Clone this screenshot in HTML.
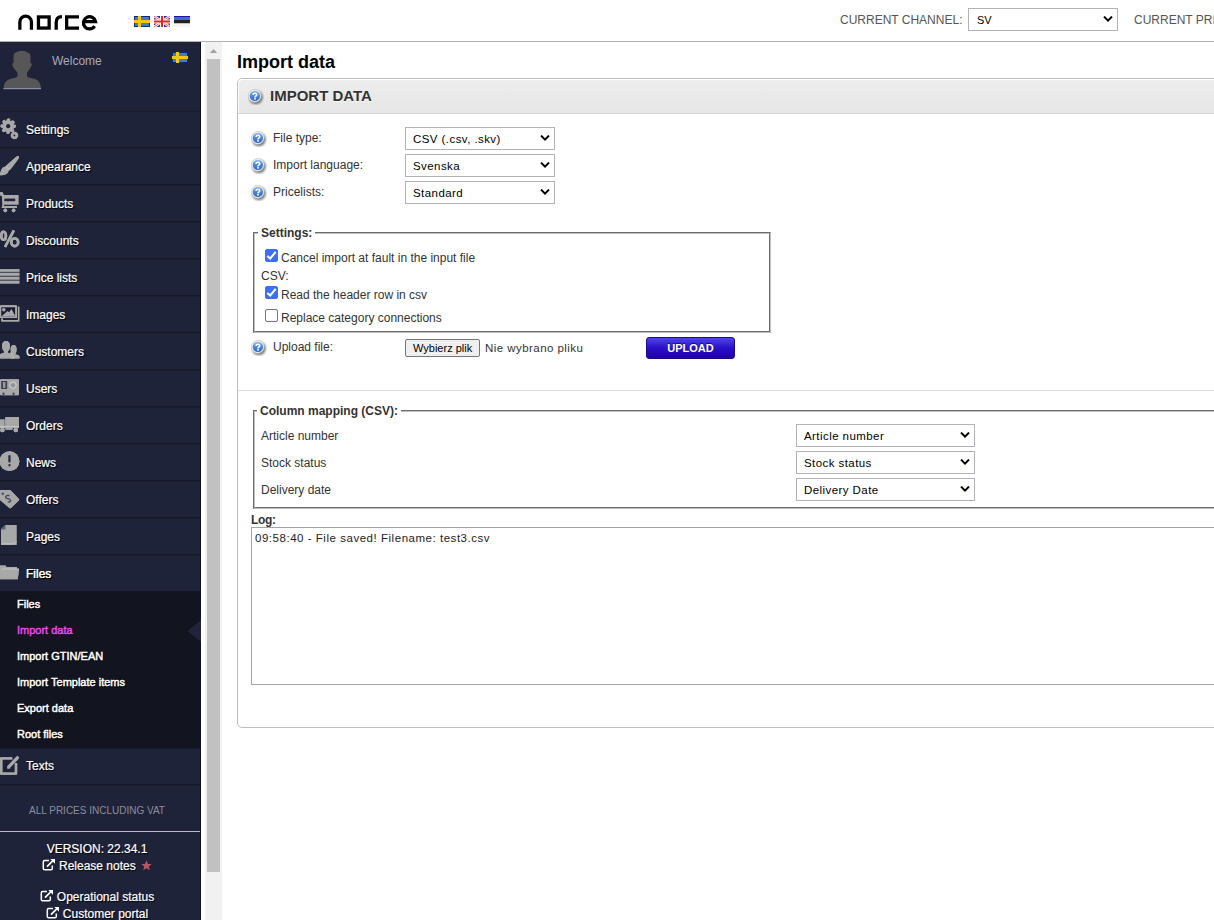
<!DOCTYPE html>
<html><head><meta charset="utf-8">
<style>
*{box-sizing:border-box}
html,body{margin:0;padding:0}
body{width:1214px;height:920px;overflow:hidden;position:relative;background:#fff;font-family:"Liberation Sans",sans-serif;font-size:12px;color:#333}
.a{position:absolute}
.t{position:absolute;white-space:nowrap;line-height:1}
#hdr{left:0;top:0;width:1214px;height:42px;border-bottom:1px solid #b3b3b3;background:#fff}
#side{left:0;top:42px;width:201px;height:878px;background:#1f2339;border-right:1px solid #0d1028}
.sep{position:absolute;left:0;width:200px;height:1px;background:#161929}
.mi{position:absolute;left:26px;color:#fff;font-size:12px;line-height:1;white-space:nowrap;text-shadow:1px 1px 1px #000;-webkit-text-stroke:0.2px #fff}
.ico{position:absolute;left:0}
.sub{position:absolute;left:17px;color:#fff;font-size:11px;line-height:1;white-space:nowrap;text-shadow:1px 1px 1px #000;-webkit-text-stroke:0.45px currentColor}
.sel{position:absolute;border:1px solid #b0b2b7;background:#fff;height:23px}
.sel span{position:absolute;left:7px;top:6px;font-size:11.5px;line-height:1;color:#000;white-space:nowrap;letter-spacing:0.43px}
.sel svg{position:absolute;right:4px;top:7px}
.help{position:absolute;width:16px;height:16px}
.lab{position:absolute;font-size:12px;line-height:1;color:#333;white-space:nowrap}
.fs{border:2px groove #c0c0c0}
.cb{position:absolute;width:13px;height:13px;border:1px solid #767676;border-radius:2px;background:#fff}
.cb.on{background:#3b6ff5;border-color:#3b6ff5}
.cb svg{position:absolute;left:-1px;top:-1px}
</style></head><body>
<svg width="0" height="0" style="position:absolute">
<defs>
<radialGradient id="hg" cx="0.4" cy="0.35" r="0.7">
<stop offset="0" stop-color="#9cc4f5"/><stop offset="0.6" stop-color="#4f86d8"/><stop offset="1" stop-color="#2d5fb5"/>
</radialGradient>
<filter id="hb" x="-50%" y="-50%" width="200%" height="200%"><feGaussianBlur stdDeviation="0.9"/></filter>
<linearGradient id="hg2" x1="0" y1="0" x2="0" y2="1"><stop offset="0" stop-color="#8fbdf6"/><stop offset="0.45" stop-color="#4c8be3"/><stop offset="1" stop-color="#2a66c8"/></linearGradient>
<symbol id="help" viewBox="0 0 16 16">
<circle cx="7.9" cy="8.3" r="6.9" fill="#222" opacity="0.6" filter="url(#hb)"/>
<circle cx="6.8" cy="6.8" r="6.4" fill="#f1ece3" stroke="#c4c4c4" stroke-width="0.5"/>
<circle cx="6.9" cy="6.9" r="5.2" fill="url(#hg2)"/>
<path d="M5 6Q5.1 4.3 6.9 4.3Q8.7 4.3 8.7 5.8Q8.7 6.7 7.8 7.1Q7 7.5 7 8.5" fill="none" stroke="#fff" stroke-width="1.6"/>
<rect x="6.1" y="9.1" width="1.8" height="1.5" fill="#fff"/>
</symbol>
<symbol id="chev" viewBox="0 0 10 6"><path d="M1 0.6 L5 4.6 L9 0.6" fill="none" stroke="#000" stroke-width="2"/></symbol>
</defs>
</svg>

<!-- HEADER -->
<div id="hdr" class="a">
<svg class="a" style="left:0;top:0" width="110" height="42" viewBox="0 0 110 42">
<g fill="none" stroke="#000" stroke-width="3.3">
<path d="M19.85 29.7V21.9A5.8 5.8 0 0 1 31.45 21.9V29.7"/>
<rect x="38.45" y="16.95" width="10.7" height="11.1"/>
<path d="M56.2 29.7V22.4Q56.2 16.8 61.9 16.6"/>
<path d="M79 16.95H66.65V28.05H79"/>
<path d="M83.4 21.6H95.5A6.1 6.1 0 1 0 94.6 26.2"/>
</g>
</svg>
<svg class="a" style="left:134px;top:16px" width="16" height="11" viewBox="0 0 16 11"><rect width="16" height="11" fill="#0b2a7a"/><rect x="1" y="1" width="14" height="9" fill="#3d7fb8"/><rect x="4" y="0" width="3" height="11" fill="#f5c518"/><rect x="0" y="4" width="16" height="3" fill="#f5c518"/></svg>
<svg class="a" style="left:154px;top:16px" width="16" height="11" viewBox="0 0 16 11"><rect width="16" height="11" fill="#2a3c96"/><path d="M0 0L16 11M16 0L0 11" stroke="#fff" stroke-width="2.5"/><path d="M0 0L16 11M16 0L0 11" stroke="#e33" stroke-width="0.8"/><rect x="6" y="0" width="4" height="11" fill="#fff"/><rect x="0" y="3.5" width="16" height="4" fill="#fff"/><rect x="7" y="0" width="2" height="11" fill="#e22"/><rect x="0" y="4.5" width="16" height="2" fill="#e22"/></svg>
<svg class="a" style="left:174px;top:16px" width="16" height="11" viewBox="0 0 16 11"><rect width="16" height="4" fill="#3a6fd0"/><rect y="0" width="16" height="1" fill="#2010b0"/><rect y="4" width="16" height="3.5" fill="#222"/><rect y="7.5" width="16" height="3.5" fill="#f4f4f4"/></svg>
<div class="t" style="left:840px;top:14px;color:#555">CURRENT CHANNEL:</div>
<div class="sel" style="left:968px;top:8px;width:150px"><span style="top:6px;font-size:11px;left:8px;letter-spacing:0">SV</span><svg width="10" height="6" style="right:4px;top:7px"><use href="#chev"/></svg></div>
<div class="t" style="left:1134px;top:14px;color:#555">CURRENT PRICELIST:</div>
</div>

<!-- SIDEBAR -->
<div id="side" class="a"></div>
<svg class="a" style="left:0;top:42px" width="60" height="60" viewBox="0 42 60 60"><path d="M3.5 88.6Q4 80.5 10 79L16 77.6Q17.5 77 17.5 75.5V72.8L13.3 67.3Q12.2 66 12.5 63.5L13.6 62.5V55Q14 52.5 17 52Q19 50.8 22.5 50.8Q26 51 27.5 52.5Q30.5 53.5 30.5 56V63L31.8 64Q31.8 66 30.8 67.3L27 72.8V75.5Q27 77 28.5 77.6L35 79Q40.5 80.5 41 88.6Z" fill="#575757"/><rect x="3.5" y="88" width="37.5" height="1.2" fill="#8a8ea4"/></svg>
<div class="t" style="left:52px;top:55px;color:#a9a9b3">Welcome</div>
<svg class="a" style="left:172px;top:52px" width="16" height="11" viewBox="0 0 16 11"><rect width="16" height="11" fill="#0b2a7a"/><rect x="1" y="1" width="14" height="9" fill="#3d7fb8"/><rect x="4" y="0" width="3" height="11" fill="#f5c518"/><rect x="0" y="4" width="16" height="3" fill="#f5c518"/></svg>
<div class="sep" style="top:111px;background:#1a1d2c"></div>
<div class="sep" style="top:147px;background:#161926"></div><div class="sep" style="top:148px;background:#1b1e2d"></div>
<div class="sep" style="top:184px;background:#161926"></div><div class="sep" style="top:185px;background:#1b1e2d"></div>
<div class="sep" style="top:221px;background:#161926"></div><div class="sep" style="top:222px;background:#1b1e2d"></div>
<div class="sep" style="top:258px;background:#161926"></div><div class="sep" style="top:259px;background:#1b1e2d"></div>
<div class="sep" style="top:295px;background:#161926"></div><div class="sep" style="top:296px;background:#1b1e2d"></div>
<div class="sep" style="top:332px;background:#161926"></div><div class="sep" style="top:333px;background:#1b1e2d"></div>
<div class="sep" style="top:369px;background:#161926"></div><div class="sep" style="top:370px;background:#1b1e2d"></div>
<div class="sep" style="top:406px;background:#161926"></div><div class="sep" style="top:407px;background:#1b1e2d"></div>
<div class="sep" style="top:443px;background:#161926"></div><div class="sep" style="top:444px;background:#1b1e2d"></div>
<div class="sep" style="top:480px;background:#161926"></div><div class="sep" style="top:481px;background:#1b1e2d"></div>
<div class="sep" style="top:517px;background:#161926"></div><div class="sep" style="top:518px;background:#1b1e2d"></div>
<div class="sep" style="top:554px;background:#161926"></div><div class="sep" style="top:555px;background:#1b1e2d"></div>

<div class="sep" style="top:784px;background:#161926"></div><div class="sep" style="top:785px;background:#1b1e2d"></div>
<div class="sep" style="top:748px;background:#181b2a"></div>
<div class="mi" style="top:124px">Settings</div>
<div class="mi" style="top:161px">Appearance</div>
<div class="mi" style="top:198px">Products</div>
<div class="mi" style="top:235px">Discounts</div>
<div class="mi" style="top:272px">Price lists</div>
<div class="mi" style="top:309px">Images</div>
<div class="mi" style="top:346px">Customers</div>
<div class="mi" style="top:383px">Users</div>
<div class="mi" style="top:420px">Orders</div>
<div class="mi" style="top:457px">News</div>
<div class="mi" style="top:494px">Offers</div>
<div class="mi" style="top:531px">Pages</div>
<div class="mi" style="top:568px">Files</div>
<div class="a" style="left:0;top:591px;width:200px;height:157px;background:#12141f"></div>
<div class="sub" style="top:599px">Files</div>
<div class="sub" style="top:625px;color:#e74cf3">Import data</div>
<div class="sub" style="top:651px">Import GTIN/EAN</div>
<div class="sub" style="top:677px">Import Template items</div>
<div class="sub" style="top:703px">Export data</div>
<div class="sub" style="top:729px">Root files</div>
<svg class="a" style="left:187px;top:620px" width="14" height="22"><path d="M0.5 11L14 0V22Z" fill="#20233a"/></svg>
<div class="mi" style="top:760px">Texts</div>
<div class="t" style="left:0;width:194px;text-align:center;top:806px;font-size:10px;color:#8d8e9c">ALL PRICES INCLUDING VAT</div>
<div class="a" style="left:0;top:831px;width:200px;height:1px;background:#b9bac2"></div>
<div class="mi" style="left:0;width:194px;text-align:center;top:843px">VERSION: 22.34.1</div>
<div class="mi" style="left:0;width:194px;text-align:center;top:858px"><svg width="14" height="13" style="vertical-align:-1px;margin-right:3px"><path d="M7 2.6H2.6Q1.3 2.6 1.3 3.9V10.4Q1.3 11.7 2.6 11.7H9Q10.3 11.7 10.3 10.4V7.6" fill="none" stroke="#fff" stroke-width="1.5"/><path d="M5 8.6L11.2 2.4" stroke="#fff" stroke-width="1.7"/><path d="M8.3 1H13V5.7Z" fill="#fff"/></svg>Release notes <svg width="11" height="11" style="vertical-align:-1px;margin-left:2px"><path d="M5.5 0.3L7 3.9L10.8 4.1L7.8 6.5L8.8 10.3L5.5 8.2L2.2 10.3L3.2 6.5L0.2 4.1L4 3.9Z" fill="#b65563"/></svg></div>
<div class="mi" style="left:0;width:194px;text-align:center;top:889px"><svg width="14" height="13" style="vertical-align:-1px;margin-right:3px"><path d="M7 2.6H2.6Q1.3 2.6 1.3 3.9V10.4Q1.3 11.7 2.6 11.7H9Q10.3 11.7 10.3 10.4V7.6" fill="none" stroke="#fff" stroke-width="1.5"/><path d="M5 8.6L11.2 2.4" stroke="#fff" stroke-width="1.7"/><path d="M8.3 1H13V5.7Z" fill="#fff"/></svg>Operational status</div>
<div class="mi" style="left:0;width:194px;text-align:center;top:906px"><svg width="14" height="13" style="vertical-align:-1px;margin-right:3px"><path d="M7 2.6H2.6Q1.3 2.6 1.3 3.9V10.4Q1.3 11.7 2.6 11.7H9Q10.3 11.7 10.3 10.4V7.6" fill="none" stroke="#fff" stroke-width="1.5"/><path d="M5 8.6L11.2 2.4" stroke="#fff" stroke-width="1.7"/><path d="M8.3 1H13V5.7Z" fill="#fff"/></svg>Customer portal</div>

<svg class="a" style="left:0;top:114px" width="24" height="28"><g fill="#a8a8a8"><circle cx="8.2" cy="12.2" r="6"/><circle cx="8.20" cy="6.20" r="1.7"/><circle cx="12.44" cy="7.96" r="1.7"/><circle cx="14.20" cy="12.20" r="1.7"/><circle cx="12.44" cy="16.44" r="1.7"/><circle cx="8.20" cy="18.20" r="1.7"/><circle cx="3.96" cy="16.44" r="1.7"/><circle cx="2.20" cy="12.20" r="1.7"/><circle cx="3.96" cy="7.96" r="1.7"/><circle cx="8.2" cy="12.2" r="2.1" fill="#1f2339"/><circle cx="14.45" cy="21.4" r="3.3"/><circle cx="15.57" cy="18.62" r="0.9"/><circle cx="17.21" cy="20.23" r="0.9"/><circle cx="17.23" cy="22.52" r="0.9"/><circle cx="15.62" cy="24.16" r="0.9"/><circle cx="13.33" cy="24.18" r="0.9"/><circle cx="11.69" cy="22.57" r="0.9"/><circle cx="11.67" cy="20.28" r="0.9"/><circle cx="13.28" cy="18.64" r="0.9"/><circle cx="14.45" cy="21.4" r="0.8" fill="#777"/></g></svg>
<svg class="a" style="left:0;top:152px" width="24" height="28"><path fill="#a8a8a8" d="M18.7 4.3C19.4 5 18.9 6.2 18.1 7.2L10.8 16.9C10.3 17.6 9.6 18 8.7 18.4C8 21.6 5 23.4 0 23.3V21.2C1.1 19.2 1.4 15.6 4.1 15C5.1 14.8 5.6 14.1 6.6 13.2L16 5C17 4.2 18 3.8 18.7 4.3Z"/><path d="M6 14.6L9.2 17.4" stroke="#d8d8d8" stroke-width="0.6"/></svg>
<svg class="a" style="left:0;top:189px" width="24" height="28"><g fill="#a8a8a8"><path d="M0 3.2H2.6L3.6 6H18.4V15.6H4.2L3.4 17H17V19H1.6L2.6 15.4L1.8 6.4H0Z"/><rect x="4.4" y="9.6" width="10.8" height="2.6" fill="#1f2239"/><circle cx="5.3" cy="21.4" r="1.8"/><circle cx="13.6" cy="21.4" r="1.8"/></g></svg>
<svg class="a" style="left:0;top:226px" width="24" height="28"><g fill="none" stroke="#a8a8a8" stroke-width="2.6"><ellipse cx="3.6" cy="9.7" rx="2.3" ry="4"/><ellipse cx="14.7" cy="16.2" rx="3.5" ry="3.9"/><path d="M13.9 4.4L5 21"/></g></svg>
<svg class="a" style="left:0;top:263px" width="24" height="28"><rect x="0" y="6" width="19.3" height="14.8" fill="#4d505e"/><g fill="#a8a8a8"><rect x="0" y="6.1" width="19.3" height="2.7"/><rect x="0" y="10" width="19.3" height="2.7"/><rect x="0" y="14" width="19.3" height="2.6"/><rect x="0" y="17.9" width="19.3" height="2.7"/></g></svg>
<svg class="a" style="left:0;top:300px" width="24" height="28"><g fill="none" stroke="#a8a8a8" stroke-width="1.4"><path d="M17.8 7.5H18.6V20.8H2V18.5"/></g><rect x="0" y="5.2" width="17" height="12.8" rx="1" fill="#a8a8a8"/><rect x="1.3" y="7.3" width="13.8" height="9" fill="#181b30"/><path d="M1.5 16.3L7.5 11L9 12.3L11.5 9L15 15.5V16.3Z" fill="#a8a8a8"/><circle cx="3.8" cy="9.8" r="1.8" fill="#a8a8a8"/></svg>
<svg class="a" style="left:0;top:337px" width="24" height="28"><g fill="#a8a8a8"><path d="M0 21.5V18Q0 16.6 3.8 16L4 14.6Q2 12.6 2 9.5Q2 4 6 4Q10 4 10 9.5Q10 12.6 8 14.6L8.2 16Q12.5 16.6 13.5 18V21.5Z"/><path d="M11.2 21.5V19.2Q11.2 18 12 17.6Q10.6 15.6 10.6 12.6Q10.6 8 13.6 8Q16.6 8 16.6 12.6Q16.6 15.6 15.2 17.6Q19.5 18 19.5 20V21.5Z"/></g><path d="M10.5 15.5L13 19.5V21.5" stroke="#c8c8d0" stroke-width="0.7" fill="none"/></svg>
<svg class="a" style="left:0;top:374px" width="24" height="28"><rect x="0" y="5.2" width="19" height="16" rx="1" fill="#a8a8a8"/><rect x="1.2" y="7" width="6" height="8" fill="#3e4158"/><rect x="3" y="8" width="2.4" height="6" fill="#9a9a9a"/><circle cx="13" cy="11.2" r="3.2" fill="none" stroke="#d0d0d0" stroke-width="0.9"/><circle cx="13" cy="11.2" r="1.3" fill="none" stroke="#7a7c88" stroke-width="0.8"/><rect x="2.6" y="18.6" width="1.8" height="2.6" fill="#3e4158"/><rect x="12.7" y="18.6" width="1.8" height="2.6" fill="#3e4158"/></svg>
<svg class="a" style="left:0;top:411px" width="24" height="28"><g fill="#a8a8a8"><rect x="5.3" y="6.1" width="13.7" height="9.9" rx="0.6"/><path d="M0 8.5H4.5V16.5H0Z"/><rect x="0" y="15" width="19" height="1.6" fill="#c4c4c4"/><rect x="5.5" y="16.5" width="7" height="2.3"/><circle cx="2.4" cy="19" r="2.3"/><circle cx="15.8" cy="19" r="2.3"/></g></svg>
<svg class="a" style="left:0;top:448px" width="24" height="28"><circle cx="9.5" cy="13.2" r="9.9" fill="#a8a8a8"/><rect x="8.3" y="7" width="2.3" height="7.5" rx="1" fill="#2a2d45"/><rect x="8.4" y="16" width="2.1" height="2.4" rx="0.8" fill="#2a2d45"/></svg>
<svg class="a" style="left:0;top:485px" width="24" height="28"><path d="M0 5H10.3L19 14Q19.5 14.6 19 15.2L11 23Q10.2 23.6 9.4 23L0 15Z" fill="#a8a8a8"/><circle cx="2.8" cy="8.8" r="1.2" fill="#4a4d62"/><path d="M9.6 10.8Q7.2 9.6 5.8 11.6Q5.3 13.2 7.6 13.6Q10.3 14 10.6 15.6Q10.2 17.6 7.8 16.6" fill="none" stroke="#4a4d62" stroke-width="1.5"/></svg>
<svg class="a" style="left:0;top:520px" width="24" height="64"><path d="M5.5 5H16.5V25H1V9.5Z" fill="#a8a8a8"/><path d="M1 9.5L5.5 5V9.5Z" fill="#5d6075"/><path d="M1 23.8H13.5L16.5 22" stroke="#d0d0d6" stroke-width="0.7" fill="none"/>
<g transform="translate(0 35)"><path d="M0 10.5H5.5L6.5 12H17V14H19L17.8 24.3H0Z" fill="#a8a8a8"/><path d="M2 14H19" stroke="#d8d8dc" stroke-width="0.6"/></g></svg>
<svg class="a" style="left:0;top:752px" width="24" height="28"><path d="M12 6.4H2.6Q1.2 6.4 1.2 7.8V20.2Q1.2 21.6 2.6 21.6H14.6Q16 21.6 16 20.2V11.2" fill="none" stroke="#a8a8a8" stroke-width="2.4"/><path d="M9 14.6L17 6.3" stroke="#a8a8a8" stroke-width="3.3" stroke-linecap="round"/><path d="M7.4 17L7.9 13.6L10.6 16.2Z" fill="#a8a8a8"/></svg>
<div class="mi" style="top:568px">Files</div>
<svg class="a" style="left:0;top:114px" width="24" height="28"><g fill="#a8a8a8"><circle cx="8.2" cy="12.2" r="5.7"/><circle cx="8.2" cy="12.2" r="6.5" fill="none" stroke="#a8a8a8" stroke-width="2.4" stroke-dasharray="2.3 2.8" transform="rotate(-10 8.2 12.2)"/><circle cx="8.2" cy="12.2" r="2.1" fill="#1f2239"/>
<circle cx="14.4" cy="21.4" r="3"/><circle cx="14.4" cy="21.4" r="3.4" fill="none" stroke="#a8a8a8" stroke-width="1" stroke-dasharray="1.2 1.3"/><circle cx="14.4" cy="21.4" r="0.9" fill="#1f2239"/></g></svg>
<svg class="a" style="left:0;top:152px" width="24" height="28"><path fill="#a8a8a8" d="M18.7 4.3C19.4 5 18.9 6.2 18.1 7.2L10.8 16.9C10.3 17.6 9.6 18 8.7 18.4C8 21.6 5 23.4 0 23.3V21.2C1.1 19.2 1.4 15.6 4.1 15C5.1 14.8 5.6 14.1 6.6 13.2L16 5C17 4.2 18 3.8 18.7 4.3Z"/><path d="M6 14.6L9.2 17.4" stroke="#d8d8d8" stroke-width="0.6"/></svg>
<svg class="a" style="left:0;top:189px" width="24" height="28"><g fill="#a8a8a8"><path d="M0 3.2H2.6L3.6 6H18.4V15.6H4.2L3.4 17H17V19H1.6L2.6 15.4L1.8 6.4H0Z"/><rect x="4.4" y="9.6" width="10.8" height="2.6" fill="#1f2239"/><circle cx="5.3" cy="21.4" r="1.8"/><circle cx="13.6" cy="21.4" r="1.8"/></g></svg>
<svg class="a" style="left:0;top:226px" width="24" height="28"><g fill="none" stroke="#a8a8a8" stroke-width="2.6"><ellipse cx="3.6" cy="9.7" rx="2.3" ry="4"/><ellipse cx="14.7" cy="16.2" rx="3.5" ry="3.9"/><path d="M13.9 4.4L5 21"/></g></svg>
<svg class="a" style="left:0;top:263px" width="24" height="28"><rect x="0" y="6" width="19.3" height="14.8" fill="#4d505e"/><g fill="#a8a8a8"><rect x="0" y="6.1" width="19.3" height="2.7"/><rect x="0" y="10" width="19.3" height="2.7"/><rect x="0" y="14" width="19.3" height="2.6"/><rect x="0" y="17.9" width="19.3" height="2.7"/></g></svg>
<svg class="a" style="left:0;top:300px" width="24" height="28"><g fill="none" stroke="#a8a8a8" stroke-width="1.4"><path d="M17.8 7.5H18.6V20.8H2V18.5"/></g><rect x="0" y="5.2" width="17" height="12.8" rx="1" fill="#a8a8a8"/><rect x="1.3" y="7.3" width="13.8" height="9" fill="#181b30"/><path d="M1.5 16.3L7.5 11L9 12.3L11.5 9L15 15.5V16.3Z" fill="#a8a8a8"/><circle cx="3.8" cy="9.8" r="1.8" fill="#a8a8a8"/></svg>
<svg class="a" style="left:0;top:337px" width="24" height="28"><g fill="#a8a8a8"><path d="M0 21.5V18Q0 16.6 3.8 16L4 14.6Q2 12.6 2 9.5Q2 4 6 4Q10 4 10 9.5Q10 12.6 8 14.6L8.2 16Q12.5 16.6 13.5 18V21.5Z"/><path d="M11.2 21.5V19.2Q11.2 18 12 17.6Q10.6 15.6 10.6 12.6Q10.6 8 13.6 8Q16.6 8 16.6 12.6Q16.6 15.6 15.2 17.6Q19.5 18 19.5 20V21.5Z"/></g><path d="M10.5 15.5L13 19.5V21.5" stroke="#c8c8d0" stroke-width="0.7" fill="none"/></svg>
<svg class="a" style="left:0;top:374px" width="24" height="28"><rect x="0" y="5.2" width="19" height="16" rx="1" fill="#a8a8a8"/><rect x="1.2" y="7" width="6" height="8" fill="#3e4158"/><rect x="3" y="8" width="2.4" height="6" fill="#9a9a9a"/><circle cx="13" cy="11.2" r="3.2" fill="none" stroke="#d0d0d0" stroke-width="0.9"/><circle cx="13" cy="11.2" r="1.3" fill="none" stroke="#7a7c88" stroke-width="0.8"/><rect x="2.6" y="18.6" width="1.8" height="2.6" fill="#3e4158"/><rect x="12.7" y="18.6" width="1.8" height="2.6" fill="#3e4158"/></svg>
<svg class="a" style="left:0;top:411px" width="24" height="28"><g fill="#a8a8a8"><rect x="5.3" y="6.1" width="13.7" height="9.9" rx="0.6"/><path d="M0 8.5H4.5V16.5H0Z"/><rect x="0" y="15" width="19" height="1.6" fill="#c4c4c4"/><rect x="5.5" y="16.5" width="7" height="2.3"/><circle cx="2.4" cy="19" r="2.3"/><circle cx="15.8" cy="19" r="2.3"/></g></svg>
<svg class="a" style="left:0;top:448px" width="24" height="28"><circle cx="9.5" cy="13.2" r="9.9" fill="#a8a8a8"/><rect x="8.3" y="7" width="2.3" height="7.5" rx="1" fill="#2a2d45"/><rect x="8.4" y="16" width="2.1" height="2.4" rx="0.8" fill="#2a2d45"/></svg>
<svg class="a" style="left:0;top:485px" width="24" height="28"><path d="M0 5H10.3L19 14Q19.5 14.6 19 15.2L11 23Q10.2 23.6 9.4 23L0 15Z" fill="#a8a8a8"/><circle cx="2.8" cy="8.8" r="1.2" fill="#4a4d62"/><path d="M9.6 10.8Q7.2 9.6 5.8 11.6Q5.3 13.2 7.6 13.6Q10.3 14 10.6 15.6Q10.2 17.6 7.8 16.6" fill="none" stroke="#4a4d62" stroke-width="1.5"/></svg>
<svg class="a" style="left:0;top:520px" width="24" height="64"><path d="M5.5 5H16.5V25H1V9.5Z" fill="#a8a8a8"/><path d="M1 9.5L5.5 5V9.5Z" fill="#5d6075"/><path d="M1 23.8H13.5L16.5 22" stroke="#d0d0d6" stroke-width="0.7" fill="none"/>
<g transform="translate(0 35)"><path d="M0 10.5H5.5L6.5 12H17V14H19L17.8 24.3H0Z" fill="#a8a8a8"/><path d="M2 14H19" stroke="#d8d8dc" stroke-width="0.6"/></g></svg>
<svg class="a" style="left:0;top:752px" width="24" height="28"><path d="M12.5 6.4H1.2V21.6H16V11" fill="none" stroke="#a8a8a8" stroke-width="2.4"/><path d="M17.5 5.2L18.2 6L9 15.8L7 16.6L7.6 14.4L16.6 4.6Z" fill="#a8a8a8"/><path d="M16.6 4.6L18.5 6.4" stroke="#a8a8a8" stroke-width="2.6"/></svg>
<!-- SCROLLBAR -->
<div class="a" style="left:205px;top:42px;width:17px;height:878px;background:#f1f1f1"></div>
<div class="a" style="left:207px;top:59px;width:13px;height:813px;background:#c1c1c1"></div>
<svg class="a" style="left:205px;top:42px" width="16" height="16"><path d="M4.8 11L8.5 6.9L12.2 11Z" fill="#a3a3a3"/></svg>

<!-- CONTENT -->
<div class="t" style="left:237px;top:53px;font-size:18px;font-weight:bold;color:#000">Import data</div>
<div class="a" id="panel" style="left:237px;top:78px;width:1000px;height:650px;border:1px solid #bdbdbd;border-radius:5px;background:#fff;overflow:hidden">
<div class="a" style="left:0;top:0;width:1000px;height:35px;background:linear-gradient(#ededed,#e6e6e6);border-bottom:1px solid #d6d6d6;border-top-left-radius:4px;box-shadow:inset 1px 1px 0 #fff"></div>
</div>
<svg class="help" style="left:248px;top:89px"><use href="#help"/></svg>
<div class="t" style="left:270px;top:88px;font-size:15px;font-weight:bold;color:#333;text-shadow:0 1px 0 #fff">IMPORT DATA</div>

<svg class="help" style="left:251px;top:131px"><use href="#help"/></svg>
<svg class="help" style="left:251px;top:158px"><use href="#help"/></svg>
<svg class="help" style="left:251px;top:185px"><use href="#help"/></svg>
<div class="lab" style="left:273px;top:132px">File type:</div>
<div class="lab" style="left:273px;top:159px">Import language:</div>
<div class="lab" style="left:273px;top:186px">Pricelists:</div>
<div class="sel" style="left:405px;top:127px;width:150px"><span>CSV (.csv, .skv)</span><svg width="10" height="6"><use href="#chev"/></svg></div>
<div class="sel" style="left:405px;top:154px;width:150px"><span>Svenska</span><svg width="10" height="6"><use href="#chev"/></svg></div>
<div class="sel" style="left:405px;top:181px;width:150px"><span>Standard</span><svg width="10" height="6"><use href="#chev"/></svg></div>

<div class="a fs" style="left:253px;top:232px;width:518px;height:101px"></div>
<div class="t" style="left:258px;top:227px;padding:0 3px;background:#fff;font-weight:bold;color:#333">Settings:</div>
<div class="cb on" style="left:265px;top:249px"><svg width="13" height="13"><path d="M2.3 6.9L5.2 9.5L10.7 2.9" fill="none" stroke="#fff" stroke-width="2"/></svg></div>
<div class="lab" style="left:281px;top:252px">Cancel import at fault in the input file</div>
<div class="lab" style="left:261px;top:270px">CSV:</div>
<div class="cb on" style="left:265px;top:286px"><svg width="13" height="13"><path d="M2.3 6.9L5.2 9.5L10.7 2.9" fill="none" stroke="#fff" stroke-width="2"/></svg></div>
<div class="lab" style="left:281px;top:289px">Read the header row in csv</div>
<div class="cb" style="left:265px;top:309px"></div>
<div class="lab" style="left:281px;top:312px">Replace category connections</div>

<svg class="help" style="left:251px;top:340px"><use href="#help"/></svg>
<div class="lab" style="left:273px;top:341px">Upload file:</div>
<div class="a" style="left:405px;top:339px;width:75px;height:18px;border:1px solid #767676;border-radius:2px;background:#efefef"></div>
<div class="t" style="left:413px;top:343px;font-size:11px;color:#000">Wybierz plik</div>
<div class="t" style="left:485px;top:343px;font-size:11.5px;letter-spacing:0.45px;color:#333">Nie wybrano pliku</div>
<div class="a" style="left:646px;top:337px;width:89px;height:22px;border-radius:3px;background:linear-gradient(#5046e8,#2a10c8 50%,#2000a6);border:1px solid #1b0a8c"></div>
<div class="t" style="left:646px;width:89px;text-align:center;top:343px;font-size:11px;font-weight:bold;color:#fff;text-shadow:0 -1px 0 #1a0a80">UPLOAD</div>

<div class="a" style="left:238px;top:390px;width:976px;height:1px;background:#dedede"></div>

<div class="a fs" style="left:253px;top:410px;width:1000px;height:99px"></div>
<div class="t" style="left:257px;top:405px;padding:0 3px;background:#fff;font-weight:bold;color:#333">Column mapping (CSV):</div>
<div class="lab" style="left:261px;top:430px">Article number</div>
<div class="lab" style="left:261px;top:457px">Stock status</div>
<div class="lab" style="left:261px;top:484px">Delivery date</div>
<div class="sel" style="left:796px;top:424px;width:179px"><span>Article number</span><svg width="10" height="6"><use href="#chev"/></svg></div>
<div class="sel" style="left:796px;top:451px;width:179px"><span>Stock status</span><svg width="10" height="6"><use href="#chev"/></svg></div>
<div class="sel" style="left:796px;top:478px;width:179px"><span>Delivery Date</span><svg width="10" height="6"><use href="#chev"/></svg></div>

<div class="t" style="left:251px;top:514px;font-size:12px;font-weight:bold;letter-spacing:-0.3px;color:#333">Log:</div>
<div class="a" style="left:251px;top:527px;width:1000px;height:158px;border:1px solid #a3a3a3"></div>
<div class="t" style="left:255px;top:533px;font-size:11.5px;letter-spacing:0.53px;color:#222">09:58:40 - File saved! Filename: test3.csv</div>

</body></html>
